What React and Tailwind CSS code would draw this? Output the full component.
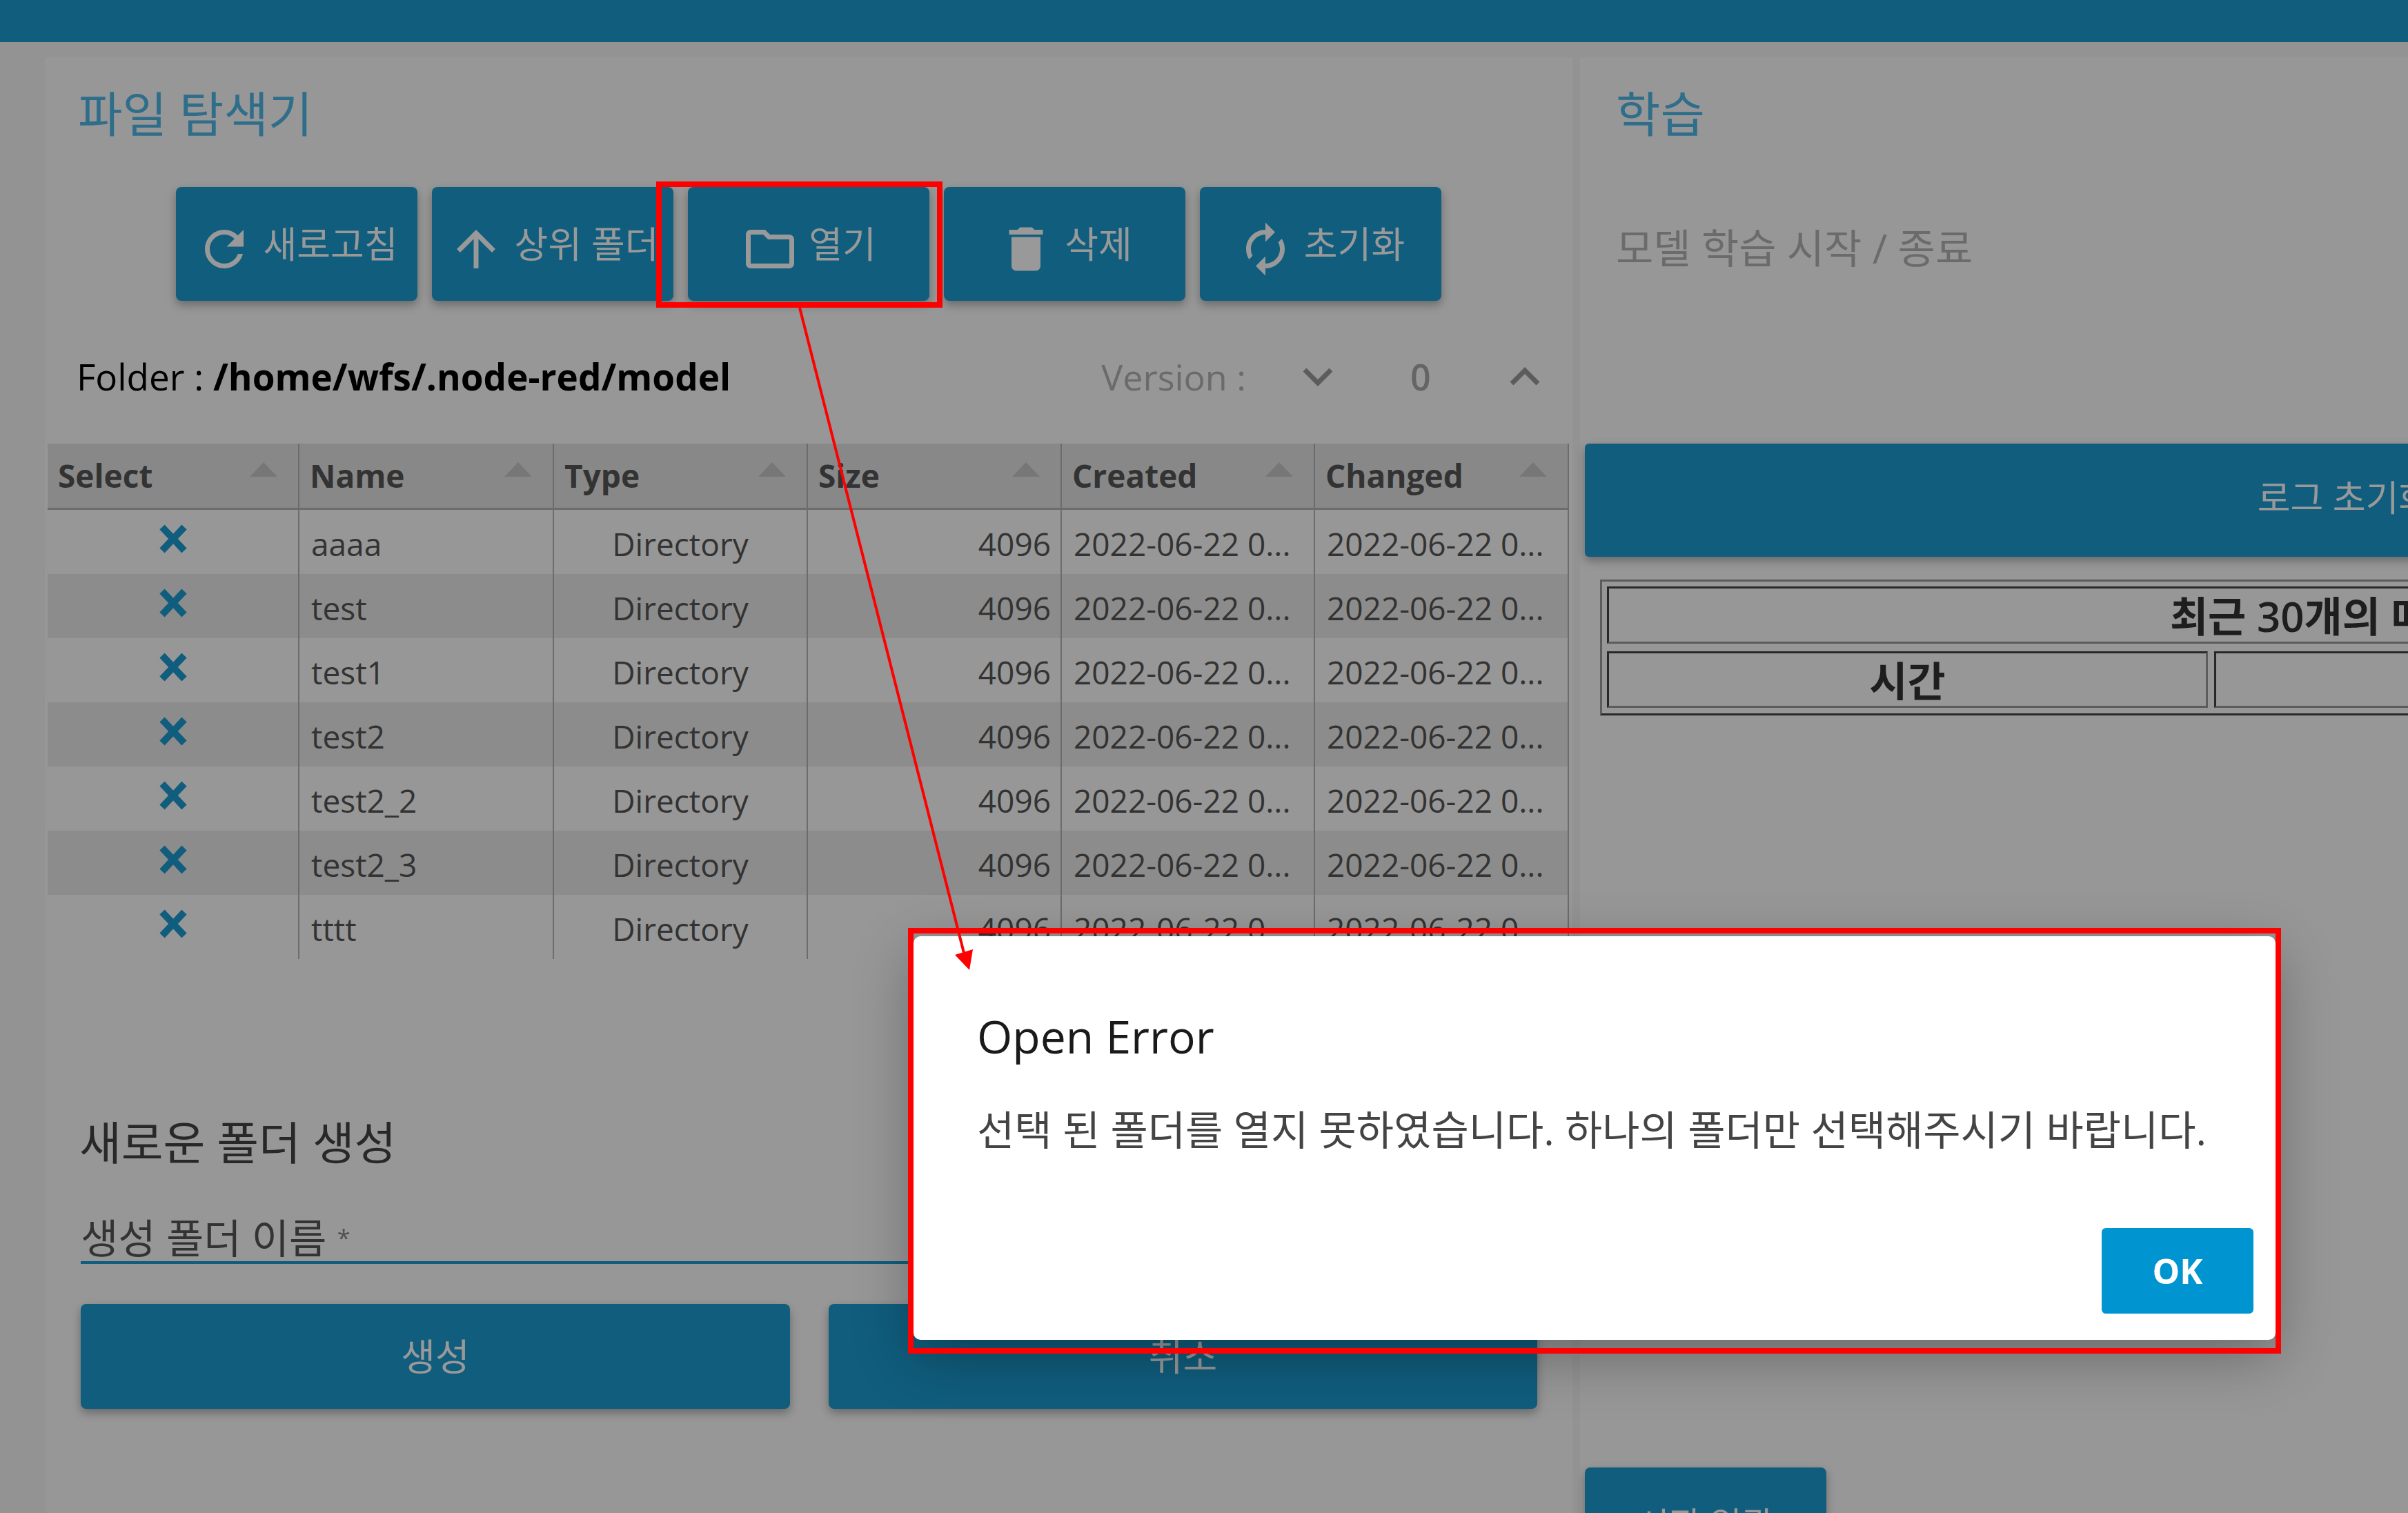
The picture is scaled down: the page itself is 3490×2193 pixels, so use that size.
import React from 'react';

const ICONS = {
    refresh: 'M17.65 6.35C16.2 4.9 14.21 4 12 4c-4.42 0-7.99 3.58-7.99 8s3.57 8 7.99 8c3.73 0 6.84-2.55 7.73-6h-2.08c-.82 2.33-3.04 4-5.65 4-3.31 0-6-2.69-6-6s2.69-6 6-6c1.66 0 3.14.69 4.22 1.78L13 11h7V4l-2.35 2.35z',
    up: 'M4 12l1.41 1.41L11 7.83V20h2V7.83l5.58 5.59L20 12l-8-8-8 8z',
    folder: 'M9.17 6l2 2H20v10H4V6h5.17M10 4H4c-1.1 0-1.99.9-1.99 2L2 18c0 1.1.9 2 2 2h16c1.1 0 2-.9 2-2V8c0-1.1-.9-2-2-2h-8l-2-2z',
    trash: 'M6 19c0 1.1.9 2 2 2h8c1.1 0 2-.9 2-2V7H6v12zM19 4h-3.5l-1-1h-5l-1 1H5v2h14V4z',
    reset: 'M12 6v3l4-4-4-4v3c-4.42 0-8 3.58-8 8 0 1.57.46 3.03 1.24 4.26L6.7 14.8c-.45-.83-.7-1.79-.7-2.8 0-3.31 2.69-6 6-6zm6.76 1.74L17.3 9.2c.44.84.7 1.79.7 2.8 0 3.31-2.69 6-6 6v-3l-4 4 4 4v-3c4.42 0 8-3.58 8-8 0-1.57-.46-3.03-1.24-4.26z',
};

const TOOLBAR = [
    { icon: 'refresh', label: '새로고침' },
    { icon: 'up', label: '상위 폴더' },
    { icon: 'folder', label: '열기' },
    { icon: 'trash', label: '삭제' },
    { icon: 'reset', label: '초기화' },
];

const COLUMNS = ['Select', 'Name', 'Type', 'Size', 'Created', 'Changed'];
const FOLDERS = ['aaaa', 'test', 'test1', 'test2', 'test2_2', 'test2_3', 'tttt'];
const DATE = '2022-06-22 0...';

const GRID = 'grid grid-cols-[365px_369px_368px_368px_367px_368px] w-[2205px]';
const CELL = 'h-full border-r-2 border-[#b4b4b4] flex items-center';
const LOG_CELL = 'flex items-center justify-center pt-[3px] border-[3px] border-t-[#444] border-l-[#444] border-b-[#999] border-r-[#999]';

function Icon({ name }) {
    return (
        <svg viewBox="0 0 24 24" className="w-[84px] h-[84px] mt-[14px] shrink-0 fill-white">
            <path d={ICONS[name]} />
        </svg>
    );
}

function ToolButton({ icon, label }) {
    return (
        <button className="w-[350px] h-[165px] shrink-0 flex items-center justify-center gap-[14px] rounded-[8px] bg-[#1b9bd1] text-white text-[53px] shadow-[0_6px_14px_rgba(0,0,0,0.3)] whitespace-nowrap overflow-hidden">
            <Icon name={icon} />
            <span>{label}</span>
        </button>
    );
}

function FileRow({ name, index }) {
    return (
        <div className={`${GRID} h-[93px] text-[46px] text-[#555] ${index % 2 ? 'bg-[#e9e9e9]' : 'bg-[#fcfcfc]'}`}>
            <div className={`${CELL} justify-center pb-[10px]`}>
                <svg viewBox="0 0 44 42" className="w-[44px] h-[42px] stroke-[#1b9bd1] fill-none">
                    <path d="M6 4 L38 38 M38 4 L6 38" strokeWidth="10" />
                </svg>
            </div>
            <div className={`${CELL} pl-[17px] pt-[6px]`}>{name}</div>
            <div className={`${CELL} justify-center pt-[6px]`}>Directory</div>
            <div className={`${CELL} justify-end pr-[14px] pt-[6px]`}>4096</div>
            <div className={`${CELL} pl-[17px] pt-[6px]`}>{DATE}</div>
            <div className={`${CELL} pl-[17px] pt-[6px]`}>{DATE}</div>
        </div>
    );
}

export default function App() {
    return (
        <div className="relative h-screen w-full overflow-hidden bg-[#f5f5f5] font-['Open_Sans','Noto_Sans_CJK_KR',sans-serif]">
            <div className="h-[61px] bg-[#1b9bd1]" />

            <div className="flex w-[4600px] h-[2132px] pt-[22px] pl-[65px] gap-[11px]">
                {/* File explorer panel */}
                <div className="w-[2214px] shrink-0 h-full bg-[#fcfcfc]">
                    <h2 className="ml-[48px] mt-[42px] h-[80px] leading-[80px] text-[70px] font-normal text-[#4fb7e8]">파일 탐색기</h2>

                    <div className="flex gap-[21px] ml-[190px] mt-[66px]">
                        {TOOLBAR.map(b => <ToolButton key={b.icon} {...b} />)}
                    </div>

                    <div className="flex items-center h-[80px] mt-[70px] ml-[46px] text-[52px] text-black">
                        <span className="whitespace-pre text-[53px]">Folder : <b className="font-bold">/home/wfs/.node-red/model</b></span>
                        <span className="ml-[537px] text-[#b2b2b2] whitespace-nowrap">Version :</span>
                        <svg viewBox="0 0 44 28" className="ml-[82px] w-[44px] h-[28px] fill-none stroke-[#9a9a9a]"><path d="M3 4 L22 23 L41 4" strokeWidth="7" /></svg>
                        <span className="ml-[112px] w-[30px] font-semibold text-[#a8a8a8]">0</span>
                        <svg viewBox="0 0 44 28" className="ml-[114px] w-[44px] h-[28px] fill-none stroke-[#9a9a9a]"><path d="M3 24 L22 5 L41 24" strokeWidth="7" /></svg>
                    </div>

                    <div className="ml-[4px] mt-[57px]">
                        <div className={`${GRID} h-[96px] bg-[#e3e3e3] border-b-[3px] border-[#b4b4b4] text-[46px] font-bold text-[#555]`}>
                            {COLUMNS.map(c => (
                                <div key={c} className={`${CELL} justify-between pl-[15px] pr-[30px]`}>
                                    <span>{c}</span>
                                    <span className="w-0 h-0 mb-[18px] border-l-[20px] border-r-[20px] border-b-[21px] border-l-transparent border-r-transparent border-b-[#c6c6c6]" />
                                </div>
                            ))}
                        </div>
                        {FOLDERS.map((f, i) => <FileRow key={f} name={f} index={i} />)}
                    </div>

                    <h3 className="ml-[50px] mt-[225px] h-[80px] leading-[80px] text-[66px] font-normal text-[#444]">새로운 폴더 생성</h3>

                    <div className="ml-[52px] mt-[65px] w-[2111px] h-[72px] border-b-4 border-[#1b9bd1] text-[59px] leading-[68px] text-[#555] whitespace-nowrap">
                        생성 폴더 이름 <span className="text-[34px] align-top text-[#888]">*</span>
                    </div>

                    <div className="flex gap-[56px] ml-[52px] mt-[58px]">
                        <button className="w-[1028px] h-[152px] rounded-[8px] bg-[#1b9bd1] text-white text-[54px] shadow-[0_6px_14px_rgba(0,0,0,0.3)]">생성</button>
                        <button className="w-[1027px] h-[152px] rounded-[8px] bg-[#1b9bd1] text-white text-[54px] shadow-[0_6px_14px_rgba(0,0,0,0.3)]">취소</button>
                    </div>
                </div>

                {/* Training panel */}
                <div className="w-[2300px] shrink-0 h-full bg-[#fcfcfc]">
                    <h2 className="ml-[52px] mt-[42px] h-[80px] leading-[80px] text-[70px] font-normal text-[#4fb7e8]">학습</h2>
                    <p className="ml-[52px] mt-[114px] h-[80px] leading-[80px] text-[59px] text-[#b2b2b2]">모델 학습 시작 / 종료</p>

                    <button className="ml-[7px] mt-[244px] w-[2202px] h-[164px] rounded-[6px] bg-[#1b9bd1] text-white text-[52px] pb-[8px] shadow-[0_6px_14px_rgba(0,0,0,0.3)] whitespace-nowrap">로그 초기화</button>

                    <div className="ml-[29px] mt-[33px] w-[2138px] h-[197px] p-[7px] border-[3px] border-t-[#999] border-l-[#999] border-b-[#444] border-r-[#444] text-[60px] font-semibold text-[#333]">
                        <div className={`${LOG_CELL} h-[83px] whitespace-nowrap`}>최근 30개의 메시지</div>
                        <div className="flex gap-[9px] mt-[11px]">
                            <div className={`${LOG_CELL} w-[871px] h-[82px]`}>시간</div>
                            <div className={`${LOG_CELL} flex-1 h-[82px]`}>메시지</div>
                        </div>
                    </div>

                    <div className="flex items-start ml-[7px] mt-[1090px]">
                        <button className="w-[350px] h-[165px] rounded-[8px] bg-[#1b9bd1] text-white text-[50px] shadow-[0_6px_14px_rgba(0,0,0,0.3)]">시작 일괄</button>
                        <span className="ml-[72px] mt-[56px] text-[62px] text-[#555] leading-[80px]">학습 상태</span>
                    </div>
                </div>
            </div>

            {/* Modal backdrop */}
            <div className="absolute inset-0 bg-black/40" />

            {/* Error dialog */}
            <div className="absolute left-[1324px] top-[1357px] w-[1974px] h-[585px] rounded-[10px] bg-white shadow-[0_24px_86px_rgba(0,0,0,0.3)] flex flex-col pl-[92px] pr-[32px]">
                <h2 className="mt-[104px] h-[80px] leading-[80px] text-[66px] font-normal text-[#1a1a1a]">Open Error</h2>
                <p className="mt-[56px] h-[80px] leading-[80px] text-[59px] text-[#444] whitespace-nowrap">선택 된 폴더를 열지 못하였습니다. 하나의 폴더만 선택해주시기 바랍니다.</p>
                <div className="flex justify-end mt-auto mb-[38px]">
                    <button className="w-[220px] h-[124px] rounded-[6px] bg-[#0095d0] text-white text-[50px] font-bold">OK</button>
                </div>
            </div>

            {/* Red annotations */}
            <div className="absolute left-[951px] top-[263px] w-[415px] h-[183px] border-8 border-[#ff0000]" />
            <div className="absolute left-[1316px] top-[1345px] w-[1990px] h-[617px] border-8 border-[#ff0000]" />
            <svg className="absolute left-0 top-0 w-[3490px] h-[2193px] pointer-events-none" viewBox="0 0 3490 2193">
                <line x1="1159" y1="446" x2="1398" y2="1385" stroke="#ff0000" strokeWidth="4" />
                <polygon points="1405,1406 1384,1384 1410,1376" fill="#ff0000" />
            </svg>
        </div>
    );
}
